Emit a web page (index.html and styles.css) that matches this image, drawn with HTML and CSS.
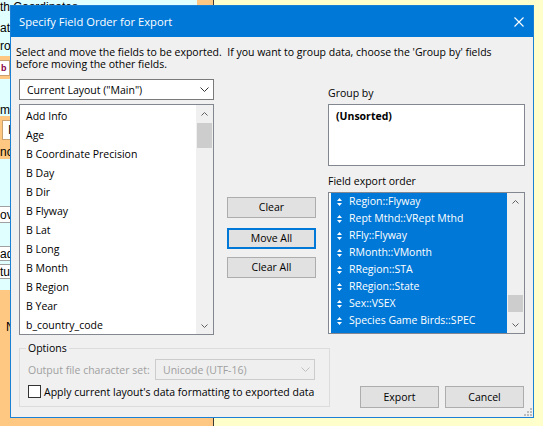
FILE: index.html
```html
<!DOCTYPE html>
<html lang="en">
<head>
<meta charset="utf-8">
<title>Specify Field Order for Export</title>
<link rel="stylesheet" href="styles.css">
</head>
<body>
<div class="desktop">
  <div class="leftpane">
    <div class="fieldcol">
      <div class="bg-top">th Coordinates</div>
      <div class="bg-row h6"></div>
      <div class="bg-row h16"><span class="bg-text">at</span></div>
      <div class="bg-row h20"><span class="bg-text">ro</span></div>
      <div class="bg-band h23"><span class="bg-input purple">b</span></div>
      <div class="bg-row h25"></div>
      <div class="bg-row h12"><span class="bg-text">m</span></div>
      <div class="bg-band h28"><span class="bg-input ind">I</span></div>
      <div class="bg-band h15"><span class="bg-text">nc</span></div>
      <div class="bg-row h47"></div>
      <div class="bg-box h17"><span class="bg-text">ovi</span></div>
      <div class="bg-row h23"></div>
      <div class="bg-box h15"><span class="bg-text">ad</span></div>
      <div class="bg-row h3"></div>
      <div class="bg-box h15"><span class="bg-text">tu</span></div>
    </div>
    <div class="bg-foot"><span class="bg-text">N</span></div>
  </div>
  <div class="workarea"></div>

  <div class="dialog">
    <div class="titlebar">
      <span class="title">Specify Field Order for Export</span>
      <svg class="close" width="10" height="10" viewBox="0 0 10 10"><path d="M0.5 0.5 L9.5 9.5 M9.5 0.5 L0.5 9.5" stroke="#fff" stroke-width="1.1" fill="none"/></svg>
    </div>
    <div class="dbody">
      <p class="intro">Select and move the fields to be exported.&nbsp; If you want to group data, choose the 'Group by' fields<br>before moving the other fields.</p>

      <div class="main">
        <div class="col-left">
          <div class="combo">
            <span>Current Layout ("Main")</span>
            <svg class="chev" width="9" height="5" viewBox="0 0 9 5"><path d="M0.5 0.5 L4.5 4.5 L8.5 0.5" stroke="#333" fill="none"/></svg>
          </div>
          <div class="listbox src">
            <ul class="items">
              <li>Add Info</li>
              <li>Age</li>
              <li>B Coordinate Precision</li>
              <li>B Day</li>
              <li>B Dir</li>
              <li>B Flyway</li>
              <li>B Lat</li>
              <li>B Long</li>
              <li>B Month</li>
              <li>B Region</li>
              <li>B Year</li>
              <li>b_country_code</li>
            </ul>
            <div class="vscroll">
              <div class="sbtn"><svg width="7" height="4" viewBox="0 0 7 4"><path d="M0.5 3.5 L3.5 0.5 L6.5 3.5" stroke="#606060" fill="none"/></svg></div>
              <div class="track"><div class="thumb src-thumb"></div></div>
              <div class="sbtn"><svg width="7" height="4" viewBox="0 0 7 4"><path d="M0.5 0.5 L3.5 3.5 L6.5 0.5" stroke="#606060" fill="none"/></svg></div>
            </div>
          </div>
        </div>

        <div class="col-mid">
          <button class="btn">Clear</button>
          <button class="btn default">Move All</button>
          <button class="btn">Clear All</button>
        </div>

        <div class="col-right">
          <div class="label lbl-group">Group by</div>
          <div class="groupbox"><b>(Unsorted)</b></div>
          <div class="label lbl-order">Field export order</div>
          <div class="listbox dst">
            <ul class="items sel">
              <li><svg class="mv" width="5" height="8" viewBox="0 0 5 8"><path d="M0 3 L2.5 0 L5 3 Z M0 5 L2.5 8 L5 5 Z" fill="#fff"/></svg>Region::Flyway</li>
              <li><svg class="mv" width="5" height="8" viewBox="0 0 5 8"><path d="M0 3 L2.5 0 L5 3 Z M0 5 L2.5 8 L5 5 Z" fill="#fff"/></svg>Rept Mthd::VRept Mthd</li>
              <li><svg class="mv" width="5" height="8" viewBox="0 0 5 8"><path d="M0 3 L2.5 0 L5 3 Z M0 5 L2.5 8 L5 5 Z" fill="#fff"/></svg>RFly::Flyway</li>
              <li><svg class="mv" width="5" height="8" viewBox="0 0 5 8"><path d="M0 3 L2.5 0 L5 3 Z M0 5 L2.5 8 L5 5 Z" fill="#fff"/></svg>RMonth::VMonth</li>
              <li><svg class="mv" width="5" height="8" viewBox="0 0 5 8"><path d="M0 3 L2.5 0 L5 3 Z M0 5 L2.5 8 L5 5 Z" fill="#fff"/></svg>RRegion::STA</li>
              <li><svg class="mv" width="5" height="8" viewBox="0 0 5 8"><path d="M0 3 L2.5 0 L5 3 Z M0 5 L2.5 8 L5 5 Z" fill="#fff"/></svg>RRegion::State</li>
              <li><svg class="mv" width="5" height="8" viewBox="0 0 5 8"><path d="M0 3 L2.5 0 L5 3 Z M0 5 L2.5 8 L5 5 Z" fill="#fff"/></svg>Sex::VSEX</li>
              <li><svg class="mv" width="5" height="8" viewBox="0 0 5 8"><path d="M0 3 L2.5 0 L5 3 Z M0 5 L2.5 8 L5 5 Z" fill="#fff"/></svg>Species Game Birds::SPEC</li>
            </ul>
            <div class="vscroll">
              <div class="sbtn"><svg width="7" height="4" viewBox="0 0 7 4"><path d="M0.5 3.5 L3.5 0.5 L6.5 3.5" stroke="#606060" fill="none"/></svg></div>
              <div class="track"><div class="thumb dst-thumb"></div></div>
              <div class="sbtn"><svg width="7" height="4" viewBox="0 0 7 4"><path d="M0.5 0.5 L3.5 3.5 L6.5 0.5" stroke="#606060" fill="none"/></svg></div>
            </div>
          </div>
        </div>
      </div>

      <div class="bottom">
        <fieldset class="options">
          <legend>Options</legend>
          <div class="charset-row">
            <span class="disabled-text">Output file character set:</span>
            <div class="combo combo-disabled">
              <span>Unicode (UTF-16)</span>
              <svg class="chev" width="9" height="5" viewBox="0 0 9 5"><path d="M0.5 0.5 L4.5 4.5 L8.5 0.5" stroke="#bfbfbf" fill="none"/></svg>
            </div>
          </div>
          <div class="check-row">
            <span class="checkbox"></span>
            <span>Apply current layout's data formatting to exported data</span>
          </div>
        </fieldset>
        <div class="actions">
          <button class="btn act">Export</button>
          <button class="btn act">Cancel</button>
        </div>
      </div>

      <svg class="grip" width="8" height="8" viewBox="0 0 8 8" fill="#bcbcbc">
        <rect x="6" y="0" width="2" height="2"/>
        <rect x="3" y="3" width="2" height="2"/>
        <rect x="6" y="3" width="2" height="2"/>
        <rect x="0" y="6" width="2" height="2"/>
        <rect x="3" y="6" width="2" height="2"/>
        <rect x="6" y="6" width="2" height="2"/>
      </svg>
    </div>
  </div>
</div>
</body>
</html>
```

FILE: styles.css
```css
* { box-sizing: border-box; }

html, body {
  margin: 0;
  padding: 0;
}

body {
  font-family: "Open Sans", "Noto Sans", sans-serif;
  font-size: 10.5px;
  color: #000;
}

/* ---------- background application ---------- */
.desktop {
  position: relative;
  width: 543px;
  height: 426px;
  overflow: hidden;
  display: flex;
}

.leftpane {
  width: 214px;
  background: #ffc882;
  border-right: 1px solid #3a3a3a;
  display: flex;
  flex-direction: column;
}

.fieldcol {
  width: 197px;
  height: 290px;
  background: #e0ffff;
  display: flex;
  flex-direction: column;
}

.bg-top {
  height: 14px;
  padding-top: 1px;
  font-family: "Liberation Sans", sans-serif;
  font-size: 12px;
  line-height: 12px;
  white-space: nowrap;
}

.bg-row, .bg-band, .bg-box {
  display: flex;
  align-items: center;
  white-space: nowrap;
  font-family: "Liberation Sans", sans-serif;
  font-size: 12px;
}

.bg-band { background: #ffc882; }
.bg-box {
  background: #fff;
  border-top: 1px solid #a0a0a0;
  border-bottom: 1px solid #a0a0a0;
}

.bg-text { line-height: 12px; }

.bg-input {
  display: block;
  width: 10px;
  height: 16px;
  background: #fff;
  border: 1px solid #c9a070;
  border-left: 0;
  font-size: 9px;
  line-height: 14px;
}
.bg-input.purple { color: #8a0046; font-weight: bold; padding-left: 1px; }
.bg-input.ind {
  width: 14px;
  height: 20px;
  margin-left: 2px;
  padding-left: 5px;
  border-left: 1px solid #c9a070;
  font-size: 12px;
  line-height: 18px;
}

.h6 { height: 6px; }
.h3 { height: 3px; }
.h12 { height: 12px; }
.h15 { height: 15px; }
.h16 { height: 16px; }
.h17 { height: 17px; }
.h20 { height: 20px; }
.h23 { height: 23px; }
.h25 { height: 25px; }
.h28 { height: 28px; }
.h47 { height: 47px; }

.bg-foot {
  padding: 30px 0 0 6px;
  font-family: "Liberation Sans", sans-serif;
  font-size: 12px;
}

.workarea {
  flex: 1;
  background: #ffffcc;
}

/* ---------- dialog window ---------- */
.dialog {
  position: absolute;
  left: 10px;
  top: 5px;
  width: 524px;
  height: 413px;
  border: 1px solid #1a80d6;
  background: #f0f0f0;
  display: flex;
  flex-direction: column;
}

.titlebar {
  height: 31px;
  background: #0078d7;
  display: flex;
  align-items: center;
  padding: 0 9px 0 8px;
  flex-shrink: 0;
}

.title {
  color: #fff;
  font-size: 11.2px;
  flex: 1;
  white-space: nowrap;
}

.close { display: block; }

.dbody {
  position: relative;
  flex: 1;
  padding: 9px 9px 0 8px;
}

.intro {
  margin: 0 0 0 -3px;
  line-height: 12px;
  white-space: nowrap;
}

.main {
  margin-top: 9px;
  display: grid;
  grid-template-columns: 195px 89px 196px;
  column-gap: 13px;
  align-items: start;
}
.main > .col-right { margin-left: -1px; }

.col-left {
  display: flex;
  flex-direction: column;
  gap: 4px;
}

.combo {
  height: 21px;
  background: #fff;
  border: 1px solid #7a7a7a;
  display: flex;
  align-items: center;
  padding: 0 4px 0 7px;
  white-space: nowrap;
}
.combo span { flex: 1; }
.chev { display: block; }

.listbox {
  background: #fff;
  border: 1px solid #828790;
  display: flex;
}
.listbox.src { height: 231px; }
.listbox.dst { height: 142px; }

.items {
  list-style: none;
  margin: 0;
  padding: 0;
  flex: 1;
  overflow: hidden;
  white-space: nowrap;
}

.src .items { padding: 2px 0 0 6px; }
.src .items li { height: 19px; line-height: 19px; }

.dst .items {
  margin-left: 2px;
  background: #0078d7;
  color: #fff;
}
.dst .items li {
  height: 17px;
  line-height: 17px;
  display: flex;
  align-items: center;
  padding-left: 6px;
}
.mv { display: block; margin-right: 7px; flex-shrink: 0; }

.vscroll {
  width: 17px;
  background: #f0f0f0;
  display: flex;
  flex-direction: column;
  flex-shrink: 0;
}
.sbtn {
  height: 17px;
  display: flex;
  align-items: center;
  justify-content: center;
  flex-shrink: 0;
}
.sbtn svg { display: block; }
.track { flex: 1; }
.thumb {
  margin: 0 1px;
  background: #cdcdcd;
}
.src-thumb { margin-top: 1px; height: 25px; }
.dst-thumb { margin-top: 85px; height: 17px; }

.col-mid {
  display: flex;
  flex-direction: column;
  padding-top: 118px;
}

.btn {
  font: inherit;
  color: #000;
  height: 21px;
  background: #e1e1e1;
  border: 1px solid #adadad;
  padding: 0;
  margin: 0;
  line-height: 19px;
}
.col-mid .btn + .btn { margin-top: 8px; }
.col-mid .btn.default { margin-top: 10px; border: 2px solid #0078d7; line-height: 17px; }

.label { line-height: 12px; white-space: nowrap; }
.lbl-group { margin: 8px 0 5px; }
.lbl-order { margin: 9px 0 5px; }

.groupbox {
  height: 62px;
  background: #fff;
  border: 1px solid #828790;
  padding: 5px 0 0 7px;
  line-height: 12px;
}

.bottom {
  margin-top: 7px;
  display: flex;
  align-items: flex-end;
}

.options {
  width: 311px;
  margin: 0;
  padding: 0 0 8px 6px;
  border: 1px solid #dcdcdc;
}
.options legend {
  padding: 0 2px;
  line-height: 12px;
}

.charset-row {
  margin: 5px 0 0 2px;
  display: grid;
  grid-template-columns: 127px 160px;
  align-items: center;
}
.disabled-text { color: #a0a0a0; white-space: nowrap; }
.combo-disabled {
  background: #efefef;
  border-color: #cccccc;
  color: #a0a0a0;
  padding-left: 7px;
}

.check-row {
  margin: 5px 0 0 2px;
  height: 13px;
  display: flex;
  align-items: center;
  gap: 3px;
  white-space: nowrap;
}
.checkbox {
  width: 13px;
  height: 13px;
  border: 1px solid #333;
  background: #fff;
  flex-shrink: 0;
}

.actions {
  margin-left: auto;
  margin-bottom: -1px;
  display: flex;
  gap: 6px;
}
.btn.act { width: 79px; height: 22px; line-height: 20px; }

.grip {
  position: absolute;
  right: 1px;
  bottom: 1px;
  display: block;
}
```
